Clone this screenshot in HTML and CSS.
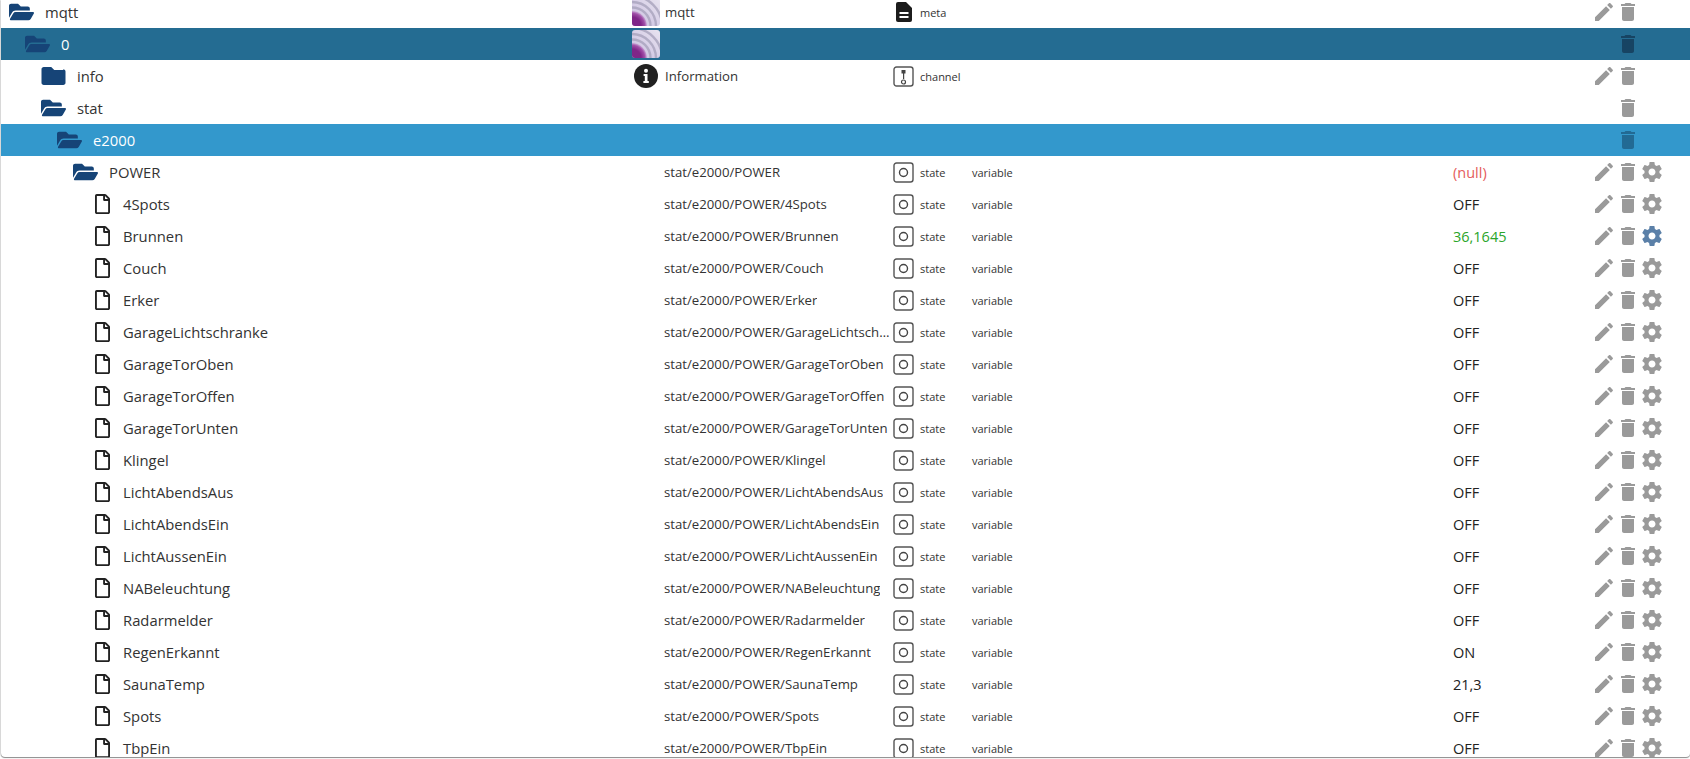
FILE: index.html
```html
<!DOCTYPE html>
<html>
	<head>
		<title>Objects</title>
		<link rel="stylesheet" href="styles.css">
	</head>
	<body>
		<!-- icon set -->
		<svg class="defs" width="0" height="0">
			<symbol id="i-open" viewBox="0 0 576 512"><path d="M572.694 292.093L500.27 416.248A63.997 63.997 0 0 1 444.989 448H45.025c-18.523 0-30.064-20.093-20.731-36.093l72.424-124.155A64 64 0 0 1 152 256h399.964c18.523 0 30.064 20.093 20.73 36.093zM152 224h328v-48c0-26.51-21.49-48-48-48H272l-64-64H48C21.49 64 0 85.49 0 112v278.046l69.077-118.418C86.214 242.25 117.989 224 152 224z"/></symbol>
			<symbol id="i-folder" viewBox="0 0 512 512"><path d="M464 128H272l-64-64H48C21.49 64 0 85.49 0 112v288c0 26.51 21.49 48 48 48h416c26.51 0 48-21.49 48-48V160c0-26.51-21.49-48-48-48z"/></symbol>
			<symbol id="i-file" viewBox="0 0 384 512"><path d="M369.9 97.9L286 14C277 5 264.8-.1 252.1-.1H48C21.5 0 0 21.5 0 48v416c0 26.5 21.5 48 48 48h288c26.5 0 48-21.5 48-48V131.9c0-12.7-5.1-25-14.1-34zM332.1 128H256V51.9l76.1 76.1zM48 464V48h160v104c0 13.3 10.7 24 24 24h104v288H48z"/></symbol>
			<symbol id="i-edit" viewBox="0 0 24 24"><path d="M3 17.25V21h3.75L17.81 9.94l-3.75-3.75L3 17.25zM20.71 7.04c.39-.39.39-1.02 0-1.41l-2.34-2.34c-.39-.39-1.02-.39-1.41 0l-1.83 1.83 3.75 3.75 1.83-1.83z"/></symbol>
			<symbol id="i-del" viewBox="0 0 24 24"><path d="M6 19c0 1.1.9 2 2 2h8c1.1 0 2-.9 2-2V7H6v12zM19 4h-3.5l-1-1h-5l-1 1H5v2h14V4z"/></symbol>
			<symbol id="i-gear" viewBox="0 0 24 24"><path d="M19.43 12.98c.04-.32.07-.64.07-.98s-.03-.66-.07-.98l2.11-1.65c.19-.15.24-.42.12-.64l-2-3.46c-.12-.22-.39-.3-.61-.22l-2.49 1c-.52-.4-1.08-.73-1.69-.98l-.38-2.65C14.46 2.18 14.25 2 14 2h-4c-.25 0-.46.18-.49.42l-.38 2.65c-.61.25-1.17.59-1.69.98l-2.49-1c-.23-.09-.49 0-.61.22l-2 3.46c-.13.22-.07.49.12.64l2.11 1.65c-.04.32-.07.65-.07.98s.03.66.07.98l-2.11 1.65c-.19.15-.24.42-.12.64l2 3.46c.12.22.39.3.61.22l2.49-1c.52.4 1.08.73 1.69.98l.38 2.65c.03.24.24.42.49.42h4c.25 0 .46-.18.49-.42l.38-2.65c.61-.25 1.17-.59 1.69-.98l2.49 1c.23.09.49 0 .61-.22l2-3.46c.12-.22.07-.49-.12-.64l-2.11-1.65zM12 15.5c-1.93 0-3.5-1.57-3.5-3.5s1.57-3.5 3.5-3.5 3.5 1.57 3.5 3.5-1.57 3.5-3.5 3.5z"/></symbol>
			<symbol id="i-meta" viewBox="0 0 16 20"><path d="M2 0h8l6 6v12a2 2 0 0 1-2 2H2a2 2 0 0 1-2-2V2a2 2 0 0 1 2-2z"/><rect x="3.5" y="10" width="9" height="2" fill="#fff"/><rect x="3.5" y="14" width="9" height="2" fill="#fff"/></symbol>
			<symbol id="i-state" viewBox="0 0 21 21"><rect x="1" y="1" width="19" height="19" rx="2.5" fill="none" stroke="#555" stroke-width="1.4"/><circle cx="10.5" cy="10.5" r="4" fill="none" stroke="#444" stroke-width="1.4"/></symbol>
			<symbol id="i-channel" viewBox="0 0 21 21"><rect x="1" y="1" width="19" height="19" rx="2.5" fill="none" stroke="#555" stroke-width="1.4"/><rect x="8.5" y="4" width="4" height="3.5" fill="#444"/><rect x="10" y="6" width="1.2" height="7" fill="#444"/><circle cx="10.5" cy="16" r="2" fill="none" stroke="#444" stroke-width="1.2"/></symbol>
			<symbol id="i-info" viewBox="0 0 24 24"><circle cx="12" cy="12" r="12" fill="#212121"/><circle cx="12" cy="6.8" r="2" fill="#fff"/><path d="M9.6 10h3.9v7h1.3v2H9.4v-2h1.4v-5H9.6z" fill="#fff"/></symbol>
			<linearGradient id="g-mqtt" x1="1" y1="0" x2="0" y2="1"><stop offset="0" stop-color="#e8e4f0"/><stop offset="1" stop-color="#c8bcdf"/></linearGradient>
			<radialGradient id="g-core" gradientUnits="userSpaceOnUse" cx="0" cy="28" r="15"><stop offset="0.6" stop-color="#7f2688"/><stop offset="0.85" stop-color="#a04fa8"/><stop offset="1" stop-color="#c9a8d6"/></radialGradient>
			<symbol id="i-mqtt" viewBox="0 0 28 28">
				<rect width="28" height="28" rx="3" fill="url(#g-mqtt)"/>
				<g fill="none" stroke="#a5a0ba" stroke-width="2.4" opacity="0.75">
					<circle cx="0" cy="28" r="18.5"/>
					<circle cx="0" cy="28" r="24"/>
					<circle cx="0" cy="28" r="30"/>
				</g>
				<path d="M0 13a15 15 0 0 1 15 15H3a3 3 0 0 1-3-3z" fill="url(#g-core)"/>
			</symbol>
		</svg>

		<!-- object table -->
		<div class="panel">
			<div class="rows">
				<div class="row">
					<div class="name lvl-0"><svg class="ico-open"><use href="#i-open"/></svg>mqtt</div>
					<div class="common"><svg class="pic"><use href="#i-mqtt"/></svg><span class="label">mqtt</span></div>
					<div class="role"><svg class="ico-meta"><use href="#i-meta"/></svg>meta</div>
					<div class="kind"></div><div class="value"></div>
					<div class="acts"><svg><use href="#i-edit"/></svg><svg><use href="#i-del"/></svg></div>
				</div>
				<div class="row sel-dark">
					<div class="name lvl-1"><svg class="ico-open"><use href="#i-open"/></svg>0</div>
					<div class="common"><svg class="pic"><use href="#i-mqtt"/></svg></div>
					<div class="role"></div><div class="kind"></div><div class="value"></div>
					<div class="acts"><svg class="blank"></svg><svg><use href="#i-del"/></svg></div>
				</div>
				<div class="row">
					<div class="name lvl-2"><svg class="ico-open"><use href="#i-folder"/></svg>info</div>
					<div class="common"><svg class="pic-info"><use href="#i-info"/></svg><span class="label">Information</span></div>
					<div class="role"><svg class="ico-role"><use href="#i-channel"/></svg>channel</div>
					<div class="kind"></div><div class="value"></div>
					<div class="acts"><svg><use href="#i-edit"/></svg><svg><use href="#i-del"/></svg></div>
				</div>
				<div class="row">
					<div class="name lvl-2"><svg class="ico-open"><use href="#i-open"/></svg>stat</div>
					<div class="common"></div><div class="role"></div><div class="kind"></div><div class="value"></div>
					<div class="acts"><svg class="blank"></svg><svg><use href="#i-del"/></svg></div>
				</div>
				<div class="row sel-light">
					<div class="name lvl-3"><svg class="ico-open"><use href="#i-open"/></svg>e2000</div>
					<div class="common"></div><div class="role"></div><div class="kind"></div><div class="value"></div>
					<div class="acts"><svg class="blank"></svg><svg><use href="#i-del"/></svg></div>
				</div>
				<div class="row">
					<div class="name lvl-4"><svg class="ico-open"><use href="#i-open"/></svg>POWER</div>
					<div class="common"><span class="label">stat/e2000/POWER</span></div>
					<div class="role"><svg class="ico-role"><use href="#i-state"/></svg>state</div>
					<div class="kind">variable</div><div class="value null">(null)</div>
					<div class="acts"><svg><use href="#i-edit"/></svg><svg><use href="#i-del"/></svg><svg><use href="#i-gear"/></svg></div>
				</div>
				<div class="row">
					<div class="name lvl-5"><svg class="ico-file"><use href="#i-file"/></svg>4Spots</div>
					<div class="common"><span class="label">stat/e2000/POWER/4Spots</span></div>
					<div class="role"><svg class="ico-role"><use href="#i-state"/></svg>state</div>
					<div class="kind">variable</div><div class="value">OFF</div>
					<div class="acts"><svg><use href="#i-edit"/></svg><svg><use href="#i-del"/></svg><svg><use href="#i-gear"/></svg></div>
				</div>
				<div class="row">
					<div class="name lvl-5"><svg class="ico-file"><use href="#i-file"/></svg>Brunnen</div>
					<div class="common"><span class="label">stat/e2000/POWER/Brunnen</span></div>
					<div class="role"><svg class="ico-role"><use href="#i-state"/></svg>state</div>
					<div class="kind">variable</div><div class="value num">36,1645</div>
					<div class="acts"><svg><use href="#i-edit"/></svg><svg><use href="#i-del"/></svg><svg class="on"><use href="#i-gear"/></svg></div>
				</div>
				<div class="row">
					<div class="name lvl-5"><svg class="ico-file"><use href="#i-file"/></svg>Couch</div>
					<div class="common"><span class="label">stat/e2000/POWER/Couch</span></div>
					<div class="role"><svg class="ico-role"><use href="#i-state"/></svg>state</div>
					<div class="kind">variable</div><div class="value">OFF</div>
					<div class="acts"><svg><use href="#i-edit"/></svg><svg><use href="#i-del"/></svg><svg><use href="#i-gear"/></svg></div>
				</div>
				<div class="row">
					<div class="name lvl-5"><svg class="ico-file"><use href="#i-file"/></svg>Erker</div>
					<div class="common"><span class="label">stat/e2000/POWER/Erker</span></div>
					<div class="role"><svg class="ico-role"><use href="#i-state"/></svg>state</div>
					<div class="kind">variable</div><div class="value">OFF</div>
					<div class="acts"><svg><use href="#i-edit"/></svg><svg><use href="#i-del"/></svg><svg><use href="#i-gear"/></svg></div>
				</div>
				<div class="row">
					<div class="name lvl-5"><svg class="ico-file"><use href="#i-file"/></svg>GarageLichtschranke</div>
					<div class="common"><span class="label">stat/e2000/POWER/GarageLichtschranke</span></div>
					<div class="role"><svg class="ico-role"><use href="#i-state"/></svg>state</div>
					<div class="kind">variable</div><div class="value">OFF</div>
					<div class="acts"><svg><use href="#i-edit"/></svg><svg><use href="#i-del"/></svg><svg><use href="#i-gear"/></svg></div>
				</div>
				<div class="row">
					<div class="name lvl-5"><svg class="ico-file"><use href="#i-file"/></svg>GarageTorOben</div>
					<div class="common"><span class="label">stat/e2000/POWER/GarageTorOben</span></div>
					<div class="role"><svg class="ico-role"><use href="#i-state"/></svg>state</div>
					<div class="kind">variable</div><div class="value">OFF</div>
					<div class="acts"><svg><use href="#i-edit"/></svg><svg><use href="#i-del"/></svg><svg><use href="#i-gear"/></svg></div>
				</div>
				<div class="row">
					<div class="name lvl-5"><svg class="ico-file"><use href="#i-file"/></svg>GarageTorOffen</div>
					<div class="common"><span class="label">stat/e2000/POWER/GarageTorOffen</span></div>
					<div class="role"><svg class="ico-role"><use href="#i-state"/></svg>state</div>
					<div class="kind">variable</div><div class="value">OFF</div>
					<div class="acts"><svg><use href="#i-edit"/></svg><svg><use href="#i-del"/></svg><svg><use href="#i-gear"/></svg></div>
				</div>
				<div class="row">
					<div class="name lvl-5"><svg class="ico-file"><use href="#i-file"/></svg>GarageTorUnten</div>
					<div class="common"><span class="label">stat/e2000/POWER/GarageTorUnten</span></div>
					<div class="role"><svg class="ico-role"><use href="#i-state"/></svg>state</div>
					<div class="kind">variable</div><div class="value">OFF</div>
					<div class="acts"><svg><use href="#i-edit"/></svg><svg><use href="#i-del"/></svg><svg><use href="#i-gear"/></svg></div>
				</div>
				<div class="row">
					<div class="name lvl-5"><svg class="ico-file"><use href="#i-file"/></svg>Klingel</div>
					<div class="common"><span class="label">stat/e2000/POWER/Klingel</span></div>
					<div class="role"><svg class="ico-role"><use href="#i-state"/></svg>state</div>
					<div class="kind">variable</div><div class="value">OFF</div>
					<div class="acts"><svg><use href="#i-edit"/></svg><svg><use href="#i-del"/></svg><svg><use href="#i-gear"/></svg></div>
				</div>
				<div class="row">
					<div class="name lvl-5"><svg class="ico-file"><use href="#i-file"/></svg>LichtAbendsAus</div>
					<div class="common"><span class="label">stat/e2000/POWER/LichtAbendsAus</span></div>
					<div class="role"><svg class="ico-role"><use href="#i-state"/></svg>state</div>
					<div class="kind">variable</div><div class="value">OFF</div>
					<div class="acts"><svg><use href="#i-edit"/></svg><svg><use href="#i-del"/></svg><svg><use href="#i-gear"/></svg></div>
				</div>
				<div class="row">
					<div class="name lvl-5"><svg class="ico-file"><use href="#i-file"/></svg>LichtAbendsEin</div>
					<div class="common"><span class="label">stat/e2000/POWER/LichtAbendsEin</span></div>
					<div class="role"><svg class="ico-role"><use href="#i-state"/></svg>state</div>
					<div class="kind">variable</div><div class="value">OFF</div>
					<div class="acts"><svg><use href="#i-edit"/></svg><svg><use href="#i-del"/></svg><svg><use href="#i-gear"/></svg></div>
				</div>
				<div class="row">
					<div class="name lvl-5"><svg class="ico-file"><use href="#i-file"/></svg>LichtAussenEin</div>
					<div class="common"><span class="label">stat/e2000/POWER/LichtAussenEin</span></div>
					<div class="role"><svg class="ico-role"><use href="#i-state"/></svg>state</div>
					<div class="kind">variable</div><div class="value">OFF</div>
					<div class="acts"><svg><use href="#i-edit"/></svg><svg><use href="#i-del"/></svg><svg><use href="#i-gear"/></svg></div>
				</div>
				<div class="row">
					<div class="name lvl-5"><svg class="ico-file"><use href="#i-file"/></svg>NABeleuchtung</div>
					<div class="common"><span class="label">stat/e2000/POWER/NABeleuchtung</span></div>
					<div class="role"><svg class="ico-role"><use href="#i-state"/></svg>state</div>
					<div class="kind">variable</div><div class="value">OFF</div>
					<div class="acts"><svg><use href="#i-edit"/></svg><svg><use href="#i-del"/></svg><svg><use href="#i-gear"/></svg></div>
				</div>
				<div class="row">
					<div class="name lvl-5"><svg class="ico-file"><use href="#i-file"/></svg>Radarmelder</div>
					<div class="common"><span class="label">stat/e2000/POWER/Radarmelder</span></div>
					<div class="role"><svg class="ico-role"><use href="#i-state"/></svg>state</div>
					<div class="kind">variable</div><div class="value">OFF</div>
					<div class="acts"><svg><use href="#i-edit"/></svg><svg><use href="#i-del"/></svg><svg><use href="#i-gear"/></svg></div>
				</div>
				<div class="row">
					<div class="name lvl-5"><svg class="ico-file"><use href="#i-file"/></svg>RegenErkannt</div>
					<div class="common"><span class="label">stat/e2000/POWER/RegenErkannt</span></div>
					<div class="role"><svg class="ico-role"><use href="#i-state"/></svg>state</div>
					<div class="kind">variable</div><div class="value">ON</div>
					<div class="acts"><svg><use href="#i-edit"/></svg><svg><use href="#i-del"/></svg><svg><use href="#i-gear"/></svg></div>
				</div>
				<div class="row">
					<div class="name lvl-5"><svg class="ico-file"><use href="#i-file"/></svg>SaunaTemp</div>
					<div class="common"><span class="label">stat/e2000/POWER/SaunaTemp</span></div>
					<div class="role"><svg class="ico-role"><use href="#i-state"/></svg>state</div>
					<div class="kind">variable</div><div class="value">21,3</div>
					<div class="acts"><svg><use href="#i-edit"/></svg><svg><use href="#i-del"/></svg><svg><use href="#i-gear"/></svg></div>
				</div>
				<div class="row">
					<div class="name lvl-5"><svg class="ico-file"><use href="#i-file"/></svg>Spots</div>
					<div class="common"><span class="label">stat/e2000/POWER/Spots</span></div>
					<div class="role"><svg class="ico-role"><use href="#i-state"/></svg>state</div>
					<div class="kind">variable</div><div class="value">OFF</div>
					<div class="acts"><svg><use href="#i-edit"/></svg><svg><use href="#i-del"/></svg><svg><use href="#i-gear"/></svg></div>
				</div>
				<div class="row">
					<div class="name lvl-5"><svg class="ico-file"><use href="#i-file"/></svg>TbpEin</div>
					<div class="common"><span class="label">stat/e2000/POWER/TbpEin</span></div>
					<div class="role"><svg class="ico-role"><use href="#i-state"/></svg>state</div>
					<div class="kind">variable</div><div class="value">OFF</div>
					<div class="acts"><svg><use href="#i-edit"/></svg><svg><use href="#i-del"/></svg><svg><use href="#i-gear"/></svg></div>
				</div>
			</div>
		</div>
	</body>
</html>
```

FILE: styles.css
```css
html, body {
	height: 100%;
	margin: 0;
	overflow: hidden;
	background-color: #fff;
}
.defs {
	display: block;
	height: 0;
}
.panel {
	height: 757px;
	overflow: hidden;
	border-radius: 0 0 4px 4px;
	box-shadow: 0 1px 1px #8a8a8a, -1px 0 1px #ddd;
	margin-left: 1px;
	font-family: "Open Sans", "Liberation Sans", sans-serif;
	font-size: 14.8px;
	color: #333;
}
.rows {
	margin-top: -4px;
	margin-left: -1px;
	padding-left: 1px;
}
.row {
	display: grid;
	grid-template-columns: 631px 261px 79px 481px 139px 98px;
	height: 32px;
	align-items: center;
	white-space: nowrap;
}
.row svg {
	fill: #9a9a9a;
}
.name, .common, .role {
	display: flex;
	align-items: center;
	min-width: 0;
}
.lvl-0 { padding-left: 8px; }
.lvl-1 { padding-left: 24px; }
.lvl-2 { padding-left: 40px; }
.lvl-3 { padding-left: 56px; }
.lvl-4 { padding-left: 72px; }
.lvl-5 { padding-left: 88px; }
.name svg.ico-open {
	width: 25px;
	height: 24px;
	margin-right: 11px;
	fill: #164477;
}
.name svg.ico-file {
	width: 15px;
	height: 20px;
	margin-left: 6px;
	margin-right: 13px;
	fill: #222;
}
.common {
	font-size: 13.2px;
	padding-right: 2px;
}
.common .label {
	margin-left: 32px;
	overflow: hidden;
	text-overflow: ellipsis;
}
.common svg + .label {
	margin-left: 5px;
}
.common svg.pic {
	width: 28px;
	height: 28px;
	flex: none;
}
.common svg.pic-info {
	width: 24px;
	height: 24px;
	margin-left: 2px;
	margin-right: 2px;
	flex: none;
}
.role, .kind {
	font-size: 11px;
}
.role svg.ico-role {
	width: 21px;
	height: 21px;
	margin-right: 6px;
	flex: none;
}
.role svg.ico-meta {
	width: 16px;
	height: 20px;
	margin-left: 3px;
	margin-right: 8px;
	fill: #1c1c1c;
}
.value {
	font-size: 14.5px;
	color: #222;
}
.value.null {
	color: #e45c5c;
}
.value.num {
	color: #2aa52a;
}
.acts {
	display: flex;
}
.acts svg {
	width: 24px;
	height: 24px;
	flex: none;
}
.acts svg.on {
	fill: #5b80a8;
}
.sel-dark {
	background-color: #246c92;
	color: #fff;
}
.sel-dark .acts svg {
	fill: #174463;
}
.sel-light {
	background-color: #3398cc;
	color: #fff;
}
.sel-light .acts svg {
	fill: #226a94;
}
```
